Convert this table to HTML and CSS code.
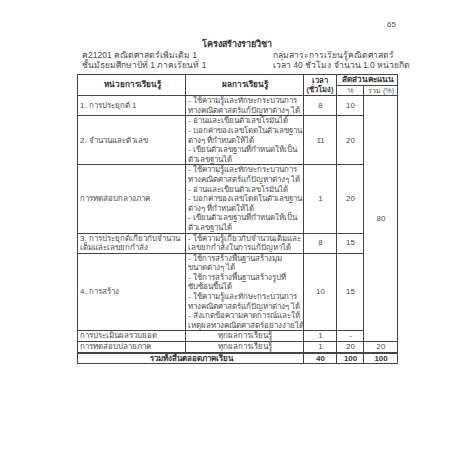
FILE: index.html
```html
<!DOCTYPE html>
<html lang="th">
<head>
<meta charset="utf-8">
<link rel="stylesheet" href="styles.css">
</head>
<body>
<div class="page">
  <div class="pagenum">65</div>
  <h1 class="title">โครงสร้างรายวิชา</h1>
  <div class="meta">
    <div class="meta-row"><span>ค21201 คณิตศาสตร์เพิ่มเติม 1</span><span class="meta-right">กลุ่มสาระการเรียนรู้คณิตศาสตร์</span></div>
    <div class="meta-row"><span>ชั้นมัธยมศึกษาปีที่ 1 ภาคเรียนที่ 1</span><span class="meta-right">เวลา 40 ชั่วโมง จำนวน 1.0 หน่วยกิต</span></div>
  </div>
  <table class="grid">
    <colgroup>
      <col class="c1"><col class="c2"><col class="c3"><col class="c4"><col class="c5">
    </colgroup>
    <thead>
      <tr class="h1">
        <th rowspan="2">หน่วยการเรียนรู้</th>
        <th rowspan="2">ผลการเรียนรู้</th>
        <th rowspan="2" class="time">เวลา<br>(ชั่วโมง)</th>
        <th colspan="2">สัดส่วนคะแนน</th>
      </tr>
      <tr class="h2">
        <th class="sub">%</th>
        <th class="sub">รวม (%)</th>
      </tr>
    </thead>
    <tbody>
      <tr class="r1">
        <td class="unit">1. การประยุกต์ 1</td>
        <td class="out">- ใช้ความรู้และทักษะกระบวนการ<br>ทางคณิตศาสตร์แก้ปัญหาต่างๆ ได้</td>
        <td class="num">8</td>
        <td class="num">10</td>
        <td class="num" rowspan="6">80</td>
      </tr>
      <tr class="r2">
        <td class="unit">2. จำนวนและตัวเลข</td>
        <td class="out">- อ่านและเขียนตัวเลขโรมันได้<br>- บอกค่าของเลขโดดในตัวเลขฐาน<br>ต่างๆ ที่กำหนดให้ได้<br>- เขียนตัวเลขฐานที่กำหนดให้เป็น<br>ตัวเลขฐานได้</td>
        <td class="num">11</td>
        <td class="num">20</td>
      </tr>
      <tr class="r3">
        <td class="unit">การทดสอบกลางภาค</td>
        <td class="out">- ใช้ความรู้และทักษะกระบวนการ<br>ทางคณิตศาสตร์แก้ปัญหาต่างๆ ได้<br>- อ่านและเขียนตัวเลขโรมันได้<br>- บอกค่าของเลขโดดในตัวเลขฐาน<br>ต่างๆ ที่กำหนดให้ได้<br>- เขียนตัวเลขฐานที่กำหนดให้เป็น<br>ตัวเลขฐานได้</td>
        <td class="num">1</td>
        <td class="num">20</td>
      </tr>
      <tr class="r4">
        <td class="unit">3. การประยุกต์เกี่ยวกับจำนวน<br>เต็มและเลขยกกำลัง</td>
        <td class="out">- ใช้ความรู้เกี่ยวกับจำนวนเต็มและ<br>เลขยกกำลังในการแก้ปัญหาได้</td>
        <td class="num">8</td>
        <td class="num">15</td>
      </tr>
      <tr class="r5">
        <td class="unit">4. การสร้าง</td>
        <td class="out">- ใช้การสร้างพื้นฐานสร้างมุม<br>ขนาดต่างๆ ได้<br>- ใช้การสร้างพื้นฐานสร้างรูปที่<br>ซับซ้อนขึ้นได้<br>- ใช้ความรู้และทักษะกระบวนการ<br>ทางคณิตศาสตร์แก้ปัญหาต่างๆ ได้<br>- สังเกตข้อความคาดการณ์และให้<br>เหตุผลทางคณิตศาสตร์อย่างง่ายได้</td>
        <td class="num">10</td>
        <td class="num">15</td>
      </tr>
      <tr class="r6">
        <td class="unit">การประเมินผลรวบยอด</td>
        <td class="center">ทุกผลการเรียนรู้</td>
        <td class="num">1</td>
        <td class="num">-</td>
      </tr>
      <tr class="r7">
        <td class="unit">การทดสอบปลายภาค</td>
        <td class="center">ทุกผลการเรียนรู้</td>
        <td class="num">1</td>
        <td class="num">20</td>
        <td class="num">20</td>
      </tr>
      <tr class="total">
        <td colspan="2" class="bold center">รวมทั้งสิ้นตลอดภาคเรียน</td>
        <td class="num bold">40</td>
        <td class="num bold">100</td>
        <td class="num bold">100</td>
      </tr>
    </tbody>
  </table>
</div>
</body>
</html>
```
FILE: styles.css
```css
html, body {
  margin: 0;
  padding: 0;
  background: #ffffff;
}
body {
  font-family: "Liberation Sans", "DejaVu Sans", sans-serif;
  color: #4a4a4a;
  font-size: 7.9px;
}
.page {
  width: 320px;
  margin-left: 77px;
  padding-top: 20px;
}
.pagenum {
  text-align: right;
  font-size: 8px;
  line-height: 10px;
  padding-right: 1px;
}
.title {
  margin: 9px 0 0 0;
  font-size: 9px;
  line-height: 11px;
  font-weight: bold;
  text-align: center;
  color: #333;
}
.meta {
  padding-left: 5px;
}
.meta-row {
  display: flex;
  line-height: 10px;
  height: 10px;
  white-space: nowrap;
  font-size: 8.5px;
}
.meta-right {
  margin-left: auto;
  width: 124px;
}
.grid {
  margin-top: 4px;
  border-collapse: collapse;
  table-layout: fixed;
  width: 320px;
  border: 1px solid #333;
}
.c1 { width: 108px; }
.c2 { width: 118px; }
.c3 { width: 33px; }
.c4 { width: 27px; }
.c5 { width: 34px; }
.grid th, .grid td {
  border: 1px solid #444;
  padding: 0 1px 0 2px;
  line-height: 9.6px;
  white-space: nowrap;
  overflow: hidden;
  vertical-align: middle;
}
.grid th {
  font-weight: bold;
  text-align: center;
  font-size: 8.2px;
  color: #333;
}
.grid th.time {
  font-size: 7.6px;
  padding: 0;
}
.grid th.sub {
  font-weight: normal;
  font-size: 7.2px;
  color: #555;
}
.h1 { height: 10px; }
.h2 { height: 9px; }
.unit { text-align: left; }
.out { text-align: left; }
.num { text-align: center; }
.center { text-align: center; }
.bold { font-weight: bold; color: #333; }
.r1 { height: 19px; }
.r4 { height: 20px; }
.r6, .r7 { height: 9px; }
.total { height: 10px; }
.total td { border-top: 2px solid #444; }
```
